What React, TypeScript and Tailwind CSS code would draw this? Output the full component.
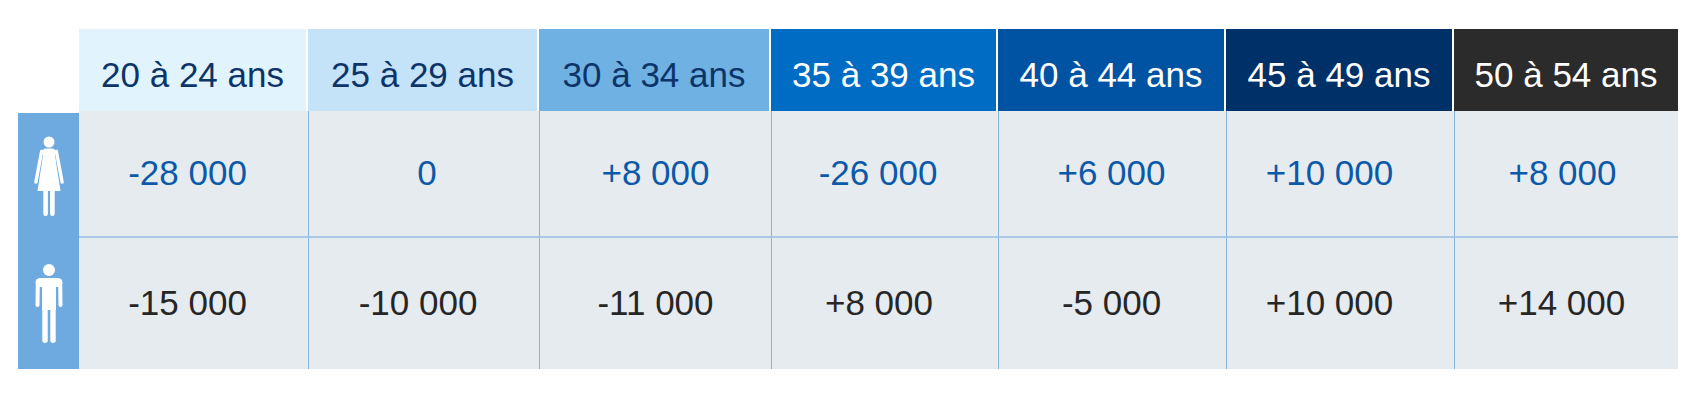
const headers = [
  { label: "20 à 24 ans", bg: "bg-[#e1f3fd]", fg: "text-[#0d3468]" },
  { label: "25 à 29 ans", bg: "bg-[#c4e2f8]", fg: "text-[#0d3468]" },
  { label: "30 à 34 ans", bg: "bg-[#6fb1e3]", fg: "text-[#0d3468]" },
  { label: "35 à 39 ans", bg: "bg-[#006cc4]", fg: "text-white" },
  { label: "40 à 44 ans", bg: "bg-[#0053a3]", fg: "text-white" },
  { label: "45 à 49 ans", bg: "bg-[#003068]", fg: "text-white" },
  { label: "50 à 54 ans", bg: "bg-[#2b2b2b]", fg: "text-white" },
];

// small nudges so the numbers sit where they do in the source table
const women = [
  { v: "-28 000", pad: "pr-[12px]" },
  { v: "0", pad: "pl-[6px]" },
  { v: "+8 000", pad: "" },
  { v: "-26 000", pad: "pr-[14px]" },
  { v: "+6 000", pad: "pr-[2px]" },
  { v: "+10 000", pad: "pr-[22px]" },
  { v: "+8 000", pad: "pr-[8px]" },
];
const men = [
  { v: "-15 000", pad: "pr-[12px]" },
  { v: "-10 000", pad: "pr-[12px]" },
  { v: "-11 000", pad: "" },
  { v: "+8 000", pad: "pr-[12px]" },
  { v: "-5 000", pad: "pr-[2px]" },
  { v: "+10 000", pad: "pr-[22px]" },
  { v: "+14 000", pad: "pr-[10px]" },
];

function WomanIcon() {
  return (
    <svg width="30" height="80" viewBox="0 0 30 80" fill="white">
      <circle cx="15" cy="6" r="5.5" />
      <rect x="8.5" y="12.5" width="13" height="8" rx="3.5" />
      <path d="M9.5 16 H20.5 L26.5 55 H3.5 Z" />
      <path d="M7.6 15.5 L1.9 46" stroke="white" strokeWidth="3.4" strokeLinecap="round" />
      <path d="M22.4 15.5 L28.1 46" stroke="white" strokeWidth="3.4" strokeLinecap="round" />
      <rect x="9.3" y="52" width="4.6" height="28" rx="2.3" />
      <rect x="16.1" y="52" width="4.6" height="28" rx="2.3" />
    </svg>
  );
}

function ManIcon() {
  return (
    <svg width="30" height="80" viewBox="0 0 30 80" fill="white">
      <circle cx="15" cy="6" r="6" />
      <rect x="1.5" y="14" width="27" height="9" rx="5" />
      <path d="M3.8 19 L3.5 41" stroke="white" strokeWidth="4" strokeLinecap="round" />
      <path d="M26.2 19 L26.5 41" stroke="white" strokeWidth="4" strokeLinecap="round" />
      <rect x="8" y="16" width="14" height="30" />
      <rect x="8.3" y="40" width="5.4" height="39" rx="2.7" />
      <rect x="16.3" y="40" width="5.4" height="39" rx="2.7" />
    </svg>
  );
}

export default function App() {
  return (
    <div className="h-[416px] w-[1701px] overflow-hidden bg-white pl-[18px] pt-[29px] font-['Liberation_Sans',Arial,sans-serif]">
      <div className="grid w-[1660px] grid-cols-[61px_229px_231px_232px_227px_228px_228px_224px] text-[35px]">
        <div className="h-[82px]" />
        {headers.map((h, i) => (
          <div
            key={h.label}
            className={`flex h-[82px] items-center justify-center pt-[10px] ${h.bg} ${h.fg} ${
              i < 6 ? "border-r-2 border-white" : ""
            }`}
          >
            {h.label}
          </div>
        ))}

        <div className="row-span-2 mt-[2px] flex flex-col bg-[#6eaae0]">
          <div className="flex h-[125px] items-center justify-center">
            <WomanIcon />
          </div>
          <div className="flex flex-1 items-center justify-center">
            <ManIcon />
          </div>
        </div>

        {women.map((c, i) => (
          <div
            key={"w" + i}
            className={`flex h-[127px] items-center justify-center border-b-2 border-b-[#aac8e3] bg-[#e6ebf0] text-[#0b59a8] ${c.pad} ${
              i > 0 ? "border-l border-l-[#86b6df]" : ""
            }`}
          >
            {c.v}
          </div>
        ))}
        {men.map((c, i) => (
          <div
            key={"m" + i}
            className={`flex h-[131px] items-center justify-center bg-[#e6ebf0] text-[#262626] ${c.pad} ${
              i > 0 ? "border-l border-l-[#86b6df]" : ""
            }`}
          >
            {c.v}
          </div>
        ))}
      </div>
    </div>
  );
}
